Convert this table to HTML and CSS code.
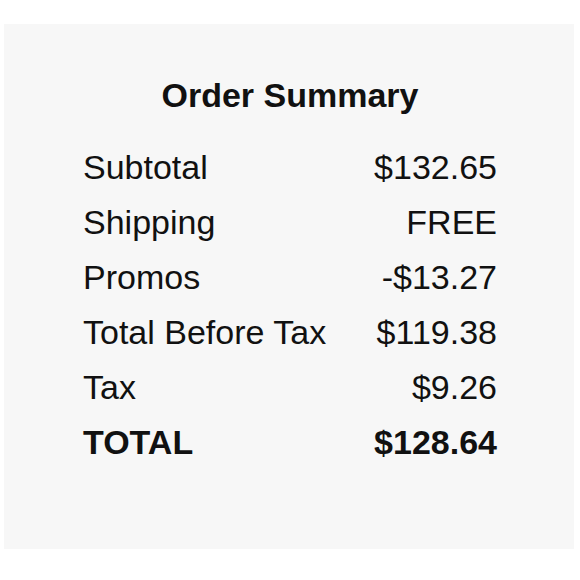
FILE: index.html
```html
<!DOCTYPE html>
<html lang="en">
<head>
<meta charset="utf-8">
<title>Order Summary</title>
<link rel="stylesheet" href="styles.css">
</head>
<body>
  <section class="summary">
    <h2 class="summary-title">Order Summary</h2>
    <div class="summary-rows">
      <div class="row"><span>Subtotal</span><span>$132.65</span></div>
      <div class="row"><span>Shipping</span><span>FREE</span></div>
      <div class="row"><span>Promos</span><span>-$13.27</span></div>
      <div class="row"><span>Total Before Tax</span><span>$119.38</span></div>
      <div class="row"><span>Tax</span><span>$9.26</span></div>
      <div class="row row-total"><span>TOTAL</span><span>$128.64</span></div>
    </div>
  </section>
</body>
</html>
```

FILE: styles.css
```css
html, body {
  margin: 0;
  padding: 0;
  background: #ffffff;
}

body {
  font-family: "Liberation Sans", Arial, sans-serif;
  color: #111111;
}

.summary {
  box-sizing: border-box;
  width: 570px;
  height: 525px;
  margin: 24px 0 0 4px;
  padding: 52px 77px 0 79px;
  background: #f7f7f7;
}

.summary-title {
  margin: 0;
  font-size: 34px;
  line-height: 38px;
  font-weight: bold;
  text-align: center;
}

.summary-rows {
  margin-top: 26px;
  display: flex;
  flex-direction: column;
}

.row {
  display: flex;
  justify-content: space-between;
  font-size: 34px;
  line-height: 55px;
}

.row-total {
  font-weight: bold;
}
```
